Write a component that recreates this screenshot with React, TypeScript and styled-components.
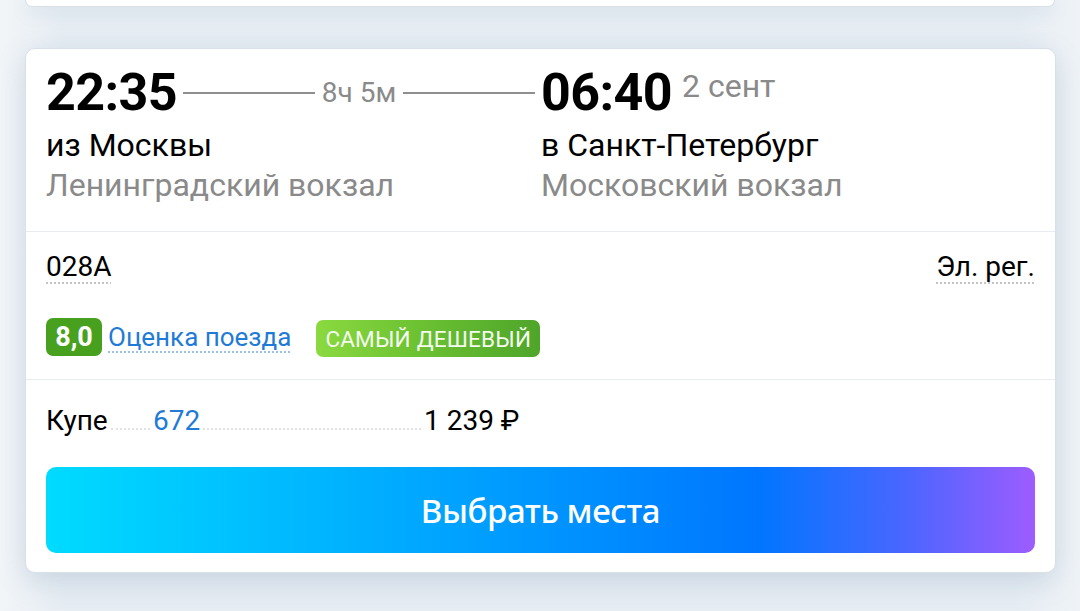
import React from "react";
import styled, { createGlobalStyle } from "styled-components";

const GlobalStyle = createGlobalStyle`
  html, body {
    margin: 0;
    padding: 0;
    background: #eaf0f5;
    font-family: Roboto, "Noto Sans", "Liberation Sans", sans-serif;
    color: #000;
  }
  * { box-sizing: border-box; }
`;

const Page = styled.div`
  width: 1080px;
  height: 611px;
  overflow: hidden;
  padding: 0 24px 0 25px;
  background: linear-gradient(90deg, #f2f5f8 0%, #e6edf3 6%, #e6edf3 94%, #eff3f7 100%);
`;

const TopCard = styled.div`
  height: 7px;
  margin-right: 1px;
  background: #fff;
  border: 1px solid #d9e1e8;
  border-top: none;
  border-radius: 0 0 10px 10px;
  box-shadow: 0 4px 18px rgba(90, 125, 160, 0.18);
`;

const Card = styled.div`
  margin-top: 41px;
  background: #fff;
  border: 1px solid #d9e1e8;
  border-radius: 10px;
  box-shadow: 0 8px 28px rgba(90, 125, 160, 0.22);
`;

const Section = styled.section<{ $top: number; $bottom: number; $divider?: boolean }>`
  padding: ${(p) => p.$top}px 20px ${(p) => p.$bottom}px 20px;
  border-top: ${(p) => (p.$divider ? "1px solid #e9ecef" : "none")};
`;

const Route = styled.div`
  display: grid;
  grid-template-columns: 495px 1fr;
`;

const Endpoint = styled.div`
  display: flex;
  flex-direction: column;
`;

const TimeRow = styled.div`
  display: flex;
  align-items: center;
  height: 64px;
`;

const Time = styled.span`
  font-size: 52px;
  font-weight: 700;
  line-height: 64px;
  letter-spacing: -0.6px;
`;

const Duration = styled.div`
  flex: 1;
  display: flex;
  align-items: center;
  gap: 7px;
  padding: 0 6px;
`;

const Line = styled.span`
  flex: 1;
  height: 2px;
  background: #8e8e8e;
`;

const DurationText = styled.span`
  font-size: 28px;
  line-height: 30px;
  color: #8a8a8a;
`;

const DateNote = styled.span`
  align-self: flex-start;
  margin-top: 5px;
  margin-left: 10px;
  font-size: 32px;
  line-height: 40px;
  color: #8a8a8a;
`;

const City = styled.div<{ $muted?: boolean }>`
  font-size: 32px;
  line-height: 40px;
  color: ${(p) => (p.$muted ? "#8a8a8a" : "#000")};
`;

const InfoRow = styled.div`
  display: flex;
  justify-content: space-between;
  font-size: 28px;
  line-height: 34px;
`;

const Dotted = styled.span<{ $color?: string }>`
  color: ${(p) => p.$color || "#000"};
  text-decoration-line: underline;
  text-decoration-style: dotted;
  text-decoration-thickness: 2px;
  text-underline-offset: 6px;
  text-decoration-color: ${(p) => (p.$color ? "#9cc0e8" : "#c4c4c4")};
`;

const Badges = styled.div`
  display: flex;
  align-items: center;
  margin-top: 32px;
`;

const Score = styled.span`
  display: inline-flex;
  align-items: center;
  justify-content: center;
  width: 56px;
  height: 38px;
  border-radius: 7px;
  background: #48a11e;
  color: #fff;
  font-size: 27px;
  font-weight: 700;
`;

const RatingLink = styled(Dotted)`
  margin-left: 6px;
  font-size: 26px;
  line-height: 32px;
`;

const Cheapest = styled.span`
  display: inline-flex;
  align-items: center;
  margin-left: 25px;
  margin-top: 4px;
  height: 37px;
  padding: 0 9px 0 9px;
  border-radius: 7px;
  background: linear-gradient(90deg, #8ad93f 0%, #66bd30 55%, #4ea52a 100%);
  color: #f4fbef;
  font-size: 22.5px;
  letter-spacing: 0.2px;
`;

const FareRow = styled.div`
  display: grid;
  grid-template-columns: 107px 271px auto;
  font-size: 28px;
  line-height: 34px;
`;

const FareCell = styled.div`
  display: flex;
  align-items: baseline;
`;

const Filler = styled.span`
  flex: 1;
  height: 2px;
  margin: 0 3px -2px 3px;
  border-bottom: 2px dotted #e2e2e2;
`;

const Seats = styled.span`
  color: #1f7bd6;
`;

const SelectButton = styled.button`
  display: flex;
  align-items: center;
  justify-content: center;
  width: 100%;
  height: 86px;
  margin-top: 29px;
  border: none;
  border-radius: 10px;
  background: linear-gradient(90deg, #00dbff 0%, #00aaff 36%, #0076ff 72%, #4a66ff 87%, #9e5cff 100%);
  color: #fff;
  font-family: "Noto Sans", "Open Sans", sans-serif;
  font-size: 33px;
  font-weight: 500;
  letter-spacing: -0.4px;
  cursor: pointer;
`;

export default function App() {
  return (
    <>
      <GlobalStyle />
      <Page>
        <TopCard />
        <Card>
          <Section $top={12} $bottom={26}>
            <Route>
              <Endpoint>
                <TimeRow>
                  <Time>22:35</Time>
                  <Duration>
                    <Line />
                    <DurationText>8ч 5м</DurationText>
                    <Line />
                  </Duration>
                </TimeRow>
                <City>из Москвы</City>
                <City $muted>Ленинградский вокзал</City>
              </Endpoint>
              <Endpoint>
                <TimeRow>
                  <Time>06:40</Time>
                  <DateNote>2 сент</DateNote>
                </TimeRow>
                <City>в Санкт-Петербург</City>
                <City $muted>Московский вокзал</City>
              </Endpoint>
            </Route>
          </Section>
          <Section $divider $top={18} $bottom={22}>
            <InfoRow>
              <Dotted>028А</Dotted>
              <Dotted>Эл. рег.</Dotted>
            </InfoRow>
            <Badges>
              <Score>8,0</Score>
              <RatingLink $color="#1f7bd6">Оценка поезда</RatingLink>
              <Cheapest>САМЫЙ ДЕШЕВЫЙ</Cheapest>
            </Badges>
          </Section>
          <Section $divider $top={24} $bottom={19}>
            <FareRow>
              <FareCell>
                <span>Купе</span>
                <Filler />
              </FareCell>
              <FareCell>
                <Seats>672</Seats>
                <Filler />
              </FareCell>
              <FareCell>
                <span>1 239 ₽</span>
              </FareCell>
            </FareRow>
            <SelectButton>Выбрать места</SelectButton>
          </Section>
        </Card>
      </Page>
    </>
  );
}
